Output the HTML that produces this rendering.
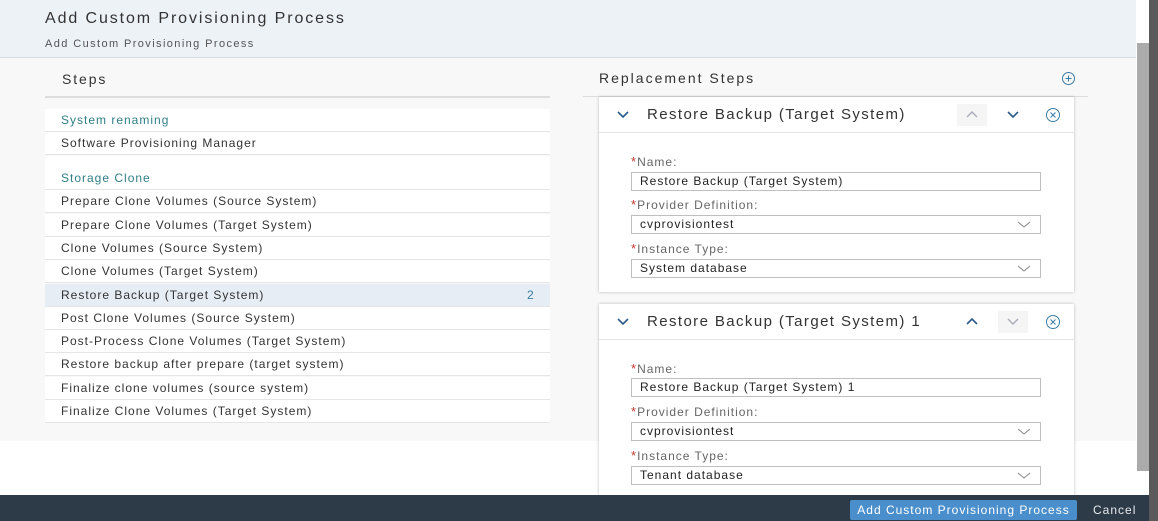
<!DOCTYPE html>
<html><head><style>
*{margin:0;padding:0;box-sizing:border-box}
body{width:1158px;height:521px;position:relative;overflow:hidden;background:#fff;font-family:"Liberation Sans",Arial,sans-serif;color:#333;letter-spacing:1px}
.a{position:absolute}
.row{position:absolute;left:45px;width:505px;height:23px;border-bottom:1px solid #e5e5e5;background:#fff;font-size:12px;padding-left:16px;line-height:22px;color:#333}
.grp{color:#2f7f86}
.lbl{position:absolute;left:32px;font-size:12px;color:#666}
.lbl b{color:#c0392b;font-weight:normal;font-size:13px}
.inp{position:absolute;left:32px;width:410px;height:19px;border:1px solid #bfbfbf;background:#fff;font-size:12px;line-height:17px;padding-left:8px;color:#222}
.card{position:absolute;left:599px;width:475px;background:#fff;box-shadow:0 0 3px rgba(0,0,0,.25)}
.ch{height:36px;border-bottom:1px solid #e5e5e5;position:relative;font-size:15px;color:#333;letter-spacing:1.4px}
</style></head><body>
<div class="a" style="left:0;top:0;width:1136px;height:58px;background:#edf2f7;border-bottom:1px solid #d5dde5"></div>
<div class="a" style="left:45px;top:10px;font-size:16px;color:#333;letter-spacing:1.9px">Add Custom Provisioning Process</div>
<div class="a" style="left:45px;top:38px;font-size:11px;color:#555;letter-spacing:1.4px">Add Custom Provisioning Process</div>
<div class="a" style="left:0;top:58px;width:1136px;height:383px;background:#f8f8f8"></div>
<div class="a" style="left:1149px;top:0;width:9px;height:521px;background:#5a5a5a"></div>
<div class="a" style="left:1137px;top:43px;width:12px;height:428px;background:#ababab"></div>
<div class="a" style="left:62px;top:71px;font-size:14px;color:#333;letter-spacing:1.9px">Steps</div>
<div class="a" style="left:45px;top:96px;width:505px;height:2px;background:#ddd"></div>
<div class="row grp" style="top:109px">System renaming</div>
<div class="row" style="top:132px">Software Provisioning Manager</div>
<div class="a" style="left:45px;top:156px;width:505px;height:12px;background:#fff"></div>
<div class="row grp" style="top:167px">Storage Clone</div>
<div class="row" style="top:190px">Prepare Clone Volumes (Source System)</div>
<div class="row" style="top:214px">Prepare Clone Volumes (Target System)</div>
<div class="row" style="top:237px">Clone Volumes (Source System)</div>
<div class="row" style="top:260px">Clone Volumes (Target System)</div>
<div class="row" style="top:284px;background:#e6edf5">Restore Backup (Target System)<span style="position:absolute;left:482px;color:#3a7ca5">2</span></div>
<div class="row" style="top:307px">Post Clone Volumes (Source System)</div>
<div class="row" style="top:330px">Post-Process Clone Volumes (Target System)</div>
<div class="row" style="top:353px">Restore backup after prepare (target system)</div>
<div class="row" style="top:377px">Finalize clone volumes (source system)</div>
<div class="row" style="top:400px">Finalize Clone Volumes (Target System)</div>

<div class="a" style="left:599px;top:70px;font-size:14px;color:#333;letter-spacing:2px">Replacement Steps</div>
<svg class="a" style="left:1061px;top:71px" width="15" height="15"><circle cx="7.5" cy="7.5" r="6" fill="none" stroke="#3a7ca5"/><path d="M7.5 4.5v6M4.5 7.5h6" stroke="#3a7ca5"/></svg>
<div class="a" style="left:583px;top:96px;width:505px;height:1px;background:#ddd"></div>

<div class="card" style="top:97px;height:195px">
<div class="ch"><svg class="a" style="left:17px;top:13px" width="14" height="10"><path d="M2 2l5 5 5-5" fill="none" stroke="#2a5a8a" stroke-width="1.6"/></svg><span class="a" style="left:48px;top:9px">Restore Backup (Target System)</span>
<div class="a" style="left:358px;top:7px;width:30px;height:22px;background:#f5f5f5"></div>
<svg class="a" style="left:366px;top:13px" width="14" height="10"><path d="M2 7l5-5 5 5" fill="none" stroke="#aab" stroke-width="1.4"/></svg>
<svg class="a" style="left:407px;top:13px" width="14" height="10"><path d="M2 2l5 5 5-5" fill="none" stroke="#2a5a8a" stroke-width="1.6"/></svg>
<svg class="a" style="left:446px;top:10px" width="16" height="16"><circle cx="8" cy="8" r="6.5" fill="none" stroke="#3a7ca5"/><path d="M5.5 5.5l5 5M10.5 5.5l-5 5" stroke="#3a7ca5"/></svg></div>
<div class="lbl" style="top:57px"><b>*</b>Name:</div>
<div class="inp" style="top:75px">Restore Backup (Target System)</div>
<div class="lbl" style="top:100px"><b>*</b>Provider Definition:</div>
<div class="inp" style="top:118px">cvprovisiontest<svg class="a" style="left:385px;top:5px" width="14" height="8"><path d="M1 1l6 5 6-5" fill="none" stroke="#888"/></svg></div>
<div class="lbl" style="top:144px"><b>*</b>Instance Type:</div>
<div class="inp" style="top:162px">System database<svg class="a" style="left:385px;top:5px" width="14" height="8"><path d="M1 1l6 5 6-5" fill="none" stroke="#888"/></svg></div>
</div>

<div class="card" style="top:304px;height:200px">
<div class="ch"><svg class="a" style="left:17px;top:13px" width="14" height="10"><path d="M2 2l5 5 5-5" fill="none" stroke="#2a5a8a" stroke-width="1.6"/></svg><span class="a" style="left:48px;top:9px">Restore Backup (Target System) 1</span>
<svg class="a" style="left:366px;top:13px" width="14" height="10"><path d="M2 7l5-5 5 5" fill="none" stroke="#2a5a8a" stroke-width="1.6"/></svg>
<div class="a" style="left:399px;top:7px;width:30px;height:22px;background:#f5f5f5"></div>
<svg class="a" style="left:407px;top:13px" width="14" height="10"><path d="M2 2l5 5 5-5" fill="none" stroke="#aab" stroke-width="1.4"/></svg>
<svg class="a" style="left:446px;top:10px" width="16" height="16"><circle cx="8" cy="8" r="6.5" fill="none" stroke="#3a7ca5"/><path d="M5.5 5.5l5 5M10.5 5.5l-5 5" stroke="#3a7ca5"/></svg></div>
<div class="lbl" style="top:57px"><b>*</b>Name:</div>
<div class="inp" style="top:74px">Restore Backup (Target System) 1</div>
<div class="lbl" style="top:100px"><b>*</b>Provider Definition:</div>
<div class="inp" style="top:118px">cvprovisiontest<svg class="a" style="left:385px;top:5px" width="14" height="8"><path d="M1 1l6 5 6-5" fill="none" stroke="#888"/></svg></div>
<div class="lbl" style="top:144px"><b>*</b>Instance Type:</div>
<div class="inp" style="top:162px">Tenant database<svg class="a" style="left:385px;top:5px" width="14" height="8"><path d="M1 1l6 5 6-5" fill="none" stroke="#888"/></svg></div>
</div>

<div class="a" style="left:0;top:495px;width:1149px;height:26px;background:#2d3a47"></div>
<div class="a" style="left:850px;top:500px;width:227px;height:20px;background:#4a8fcb;color:#fff;font-size:12px;text-align:center;line-height:20px;border-radius:2px">Add Custom Provisioning Process</div>
<div class="a" style="left:1093px;top:503px;color:#e6e9ec;font-size:12px">Cancel</div>
</body></html>
